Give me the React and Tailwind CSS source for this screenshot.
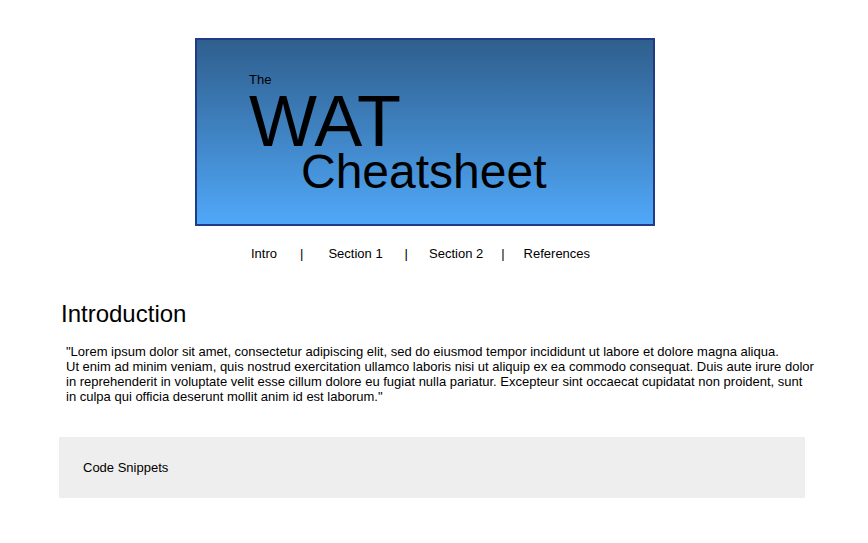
const navItems = [
  { label: "Intro", className: "" },
  { label: "|", className: "ml-[23px]" },
  { label: "Section 1", className: "ml-[25px]" },
  { label: "|", className: "ml-[22px]" },
  { label: "Section 2", className: "ml-[21px]" },
  { label: "|", className: "ml-[18px]" },
  { label: "References", className: "ml-[19px]" },
];

const Banner = () => (
  <div className="w-[460px] h-[188px] border-2 border-[#213b86] bg-gradient-to-b from-[#2f5f8e] to-[#50a8f9] pt-[33px] pl-[52px] text-black">
    <div className="text-[13px] leading-none">The</div>
    <div className="text-[72px] leading-[70px]">WAT</div>
    <div className="ml-[52px] text-[48px] leading-[31px]">Cheatsheet</div>
  </div>
);

export default function App() {
  return (
    <div
      className="min-h-[543px] w-full bg-white text-black"
      style={{ fontFamily: '"Liberation Sans", Arial, Helvetica, sans-serif' }}
    >
      <header className="ml-[195px] pt-[38px]">
        <Banner />
        <nav className="mt-[21px] w-[460px] flex pl-[56px] text-[13px] leading-none">
          {navItems.map((item, i) => (
            <span key={i} className={item.className}>
              {item.label}
            </span>
          ))}
        </nav>
      </header>

      <main className="ml-[59px] w-[746px]">
        <h1 className="mt-[42px] pl-[2px] text-[24px] leading-none">
          Introduction
        </h1>
        <p className="mt-[18px] pl-[7px] w-[770px] text-[13px] leading-[15px]">
          "Lorem ipsum dolor sit amet, consectetur adipiscing elit, sed do eiusmod tempor incididunt ut labore et dolore magna aliqua.
          <br />
          Ut enim ad minim veniam, quis nostrud exercitation ullamco laboris nisi ut aliquip ex ea commodo consequat. Duis aute irure dolor
          <br />
          in reprehenderit in voluptate velit esse cillum dolore eu fugiat nulla pariatur. Excepteur sint occaecat cupidatat non proident, sunt
          <br />
          in culpa qui officia deserunt mollit anim id est laborum."
        </p>

        <section className="mt-[33px] h-[61px] bg-[#eeeeee] flex items-center pl-[24px]">
          <h2 className="text-[13px] leading-none">Code Snippets</h2>
        </section>
      </main>
    </div>
  );
}
